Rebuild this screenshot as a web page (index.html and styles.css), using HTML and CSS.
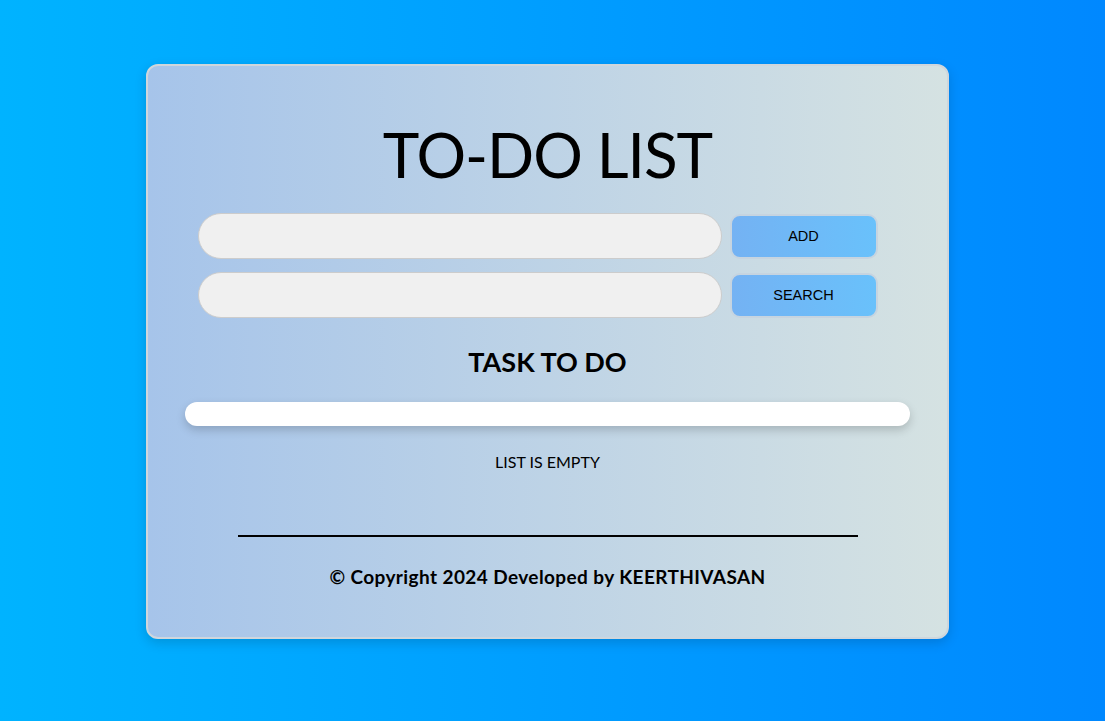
FILE: index.html
```html
<!DOCTYPE html>
<html>
<head>
<meta charset="utf-8">
<link rel="stylesheet" href="styles.css">
</head>
<body>
<div class="page">
  <div class="card">
    <h1 class="title">TO-DO LIST</h1>
    <div class="controls">
      <div class="row">
        <input class="field" type="text">
        <button class="btn">ADD</button>
      </div>
      <div class="row">
        <input class="field" type="text">
        <button class="btn">SEARCH</button>
      </div>
    </div>
    <h2 class="subtitle">TASK TO DO</h2>
    <div class="bar"></div>
    <p class="empty">LIST IS EMPTY</p>
    <hr class="rule">
    <p class="copy">© Copyright 2024 Developed by KEERTHIVASAN</p>
  </div>
</div>
</body>
</html>
```
FILE: styles.css
```css
html, body {
  margin: 0;
  height: 100%;
}
body {
  background: linear-gradient(90deg, #00b3ff 0%, #0088ff 100%);
  font-family: "Lato", "Open Sans", sans-serif;
  color: #000;
}
.page {
  display: flex;
  justify-content: center;
  padding-top: 64px;
  padding-right: 10px;
}
.card {
  width: 799px;
  height: 571px;
  box-sizing: content-box;
  border: 2px solid #cfd6dc;
  border-radius: 12px;
  background: linear-gradient(90deg, #a6c4ea 0%, #d5e2e2 100%);
  box-shadow: 0 4px 12px rgba(0, 0, 0, 0.15);
  display: flex;
  flex-direction: column;
  align-items: center;
}
.title {
  margin: 50px 0 0;
  font-size: 62px;
  font-weight: 400;
  line-height: 76px;
  letter-spacing: -1px;
}
.controls {
  margin-top: 21px;
  display: flex;
  flex-direction: column;
  gap: 13px;
  margin-right: 20px;
}
.row {
  display: flex;
  gap: 8px;
  align-items: center;
}
.field {
  width: 524px;
  height: 46px;
  box-sizing: border-box;
  border: 1px solid #cccccc;
  border-radius: 23px;
  background: #f0f0f0;
  outline: none;
}
.btn {
  width: 148px;
  height: 45px;
  box-sizing: border-box;
  border: 2px solid #c6d4e0;
  border-radius: 10px;
  background: linear-gradient(90deg, #74b2f3 0%, #69c1fb 100%);
  font-family: "Liberation Sans", Arial, sans-serif;
  font-size: 14.5px;
  color: #000;
}
.subtitle {
  margin: 29px 0 0;
  font-size: 27px;
  font-weight: 700;
  line-height: 30px;
  letter-spacing: 0;
}
.bar {
  margin-top: 25px;
  width: 725px;
  height: 24px;
  border-radius: 12px;
  background: #fff;
  box-shadow: 0 4px 10px rgba(0, 0, 0, 0.18);
}
.empty {
  margin: 26px 0 0;
  font-size: 16px;
  line-height: 20px;
}
.rule {
  margin: 63px 0 0;
  width: 620px;
  border: 0;
  height: 2px;
  background: #000;
}
.copy {
  margin: 29px 0 0;
  font-size: 19px;
  font-weight: 700;
  line-height: 22px;
  letter-spacing: 0.4px;
}
```
